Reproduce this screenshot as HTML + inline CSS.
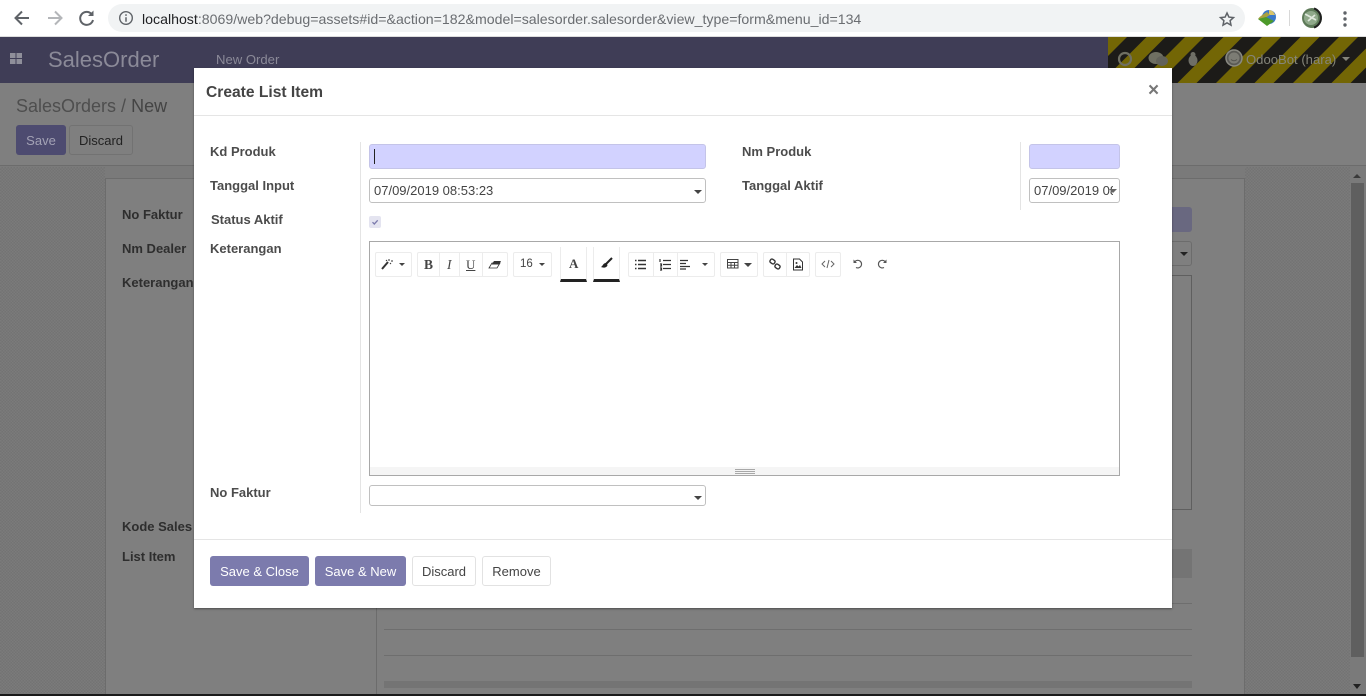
<!DOCTYPE html>
<html><head><meta charset="utf-8">
<style>
html,body{margin:0;padding:0;width:1366px;height:696px;overflow:hidden;background:#7a7a7a;font-family:"Liberation Sans",sans-serif;font-size:13px}
.a{position:absolute;box-sizing:border-box;white-space:nowrap}
.bl{font-weight:bold;color:#2e2e2e;font-size:13px;line-height:16px}
.ml{font-weight:bold;color:#4c4c4c;font-size:13px;line-height:16px}
.inp{background:#d2d2ff;border:1px solid #c4c4e8;border-radius:3px}
.sel{background:#fff;border:1px solid #c0c0c0;border-radius:3px;color:#444;font-size:13px;line-height:23px;padding-left:4px;overflow:hidden}
.car{width:0;height:0;border-left:4px solid transparent;border-right:4px solid transparent;border-top:4px solid #444}
.tb{border:1px solid #ececec;height:25px;top:252px;background:#fff;border-radius:2px}
.btn{border-radius:3px;top:556px;height:30px;line-height:31px;text-align:center;font-size:13px}
</style></head><body>

<!-- chrome bar -->
<div class="a" style="left:0;top:0;width:1366px;height:37px;background:#fff;border-bottom:1px solid #ddd"></div>
<svg class="a" style="left:0;top:0" width="110" height="36" fill="none" stroke-width="2">
<path d="M29 18H16M22 11.500L15.500 18L22 24.500" stroke="#5f6368"/>
<path d="M48 18H61M55 11.500L61.500 18L55 24.500" stroke="#b4b6b9"/>
<path d="M91.500 14A6.500 6.500 0 1 0 93 20" stroke="#5f6368"/><path d="M93.500 10.500V16H88Z" fill="#5f6368"/>
</svg>
<div class="a" style="left:108px;top:4px;width:1137px;height:28px;background:#f1f3f4;border-radius:14px"></div>
<svg class="a" style="left:118px;top:10px" width="16" height="16" fill="none"><circle cx="8" cy="8" r="6.300" stroke="#5f6368" stroke-width="1.400"/><path d="M8 7.200V11.800M8 4.300V5.900" stroke="#5f6368" stroke-width="1.500"/></svg>
<div class="a" style="left:142px;top:9.500px;font-size:14.150px;line-height:18px;color:#6a6d71"><span style="color:#202124">localhost</span>:8069/web?debug=assets#id=&amp;action=182&amp;model=salesorder.salesorder&amp;view_type=form&amp;menu_id=134</div>
<svg class="a" style="left:1218px;top:10px" width="18" height="17"><path d="M9 3L10.900 7.100L15.500 7.600L12.100 10.700L13 15.200L9 12.900L5 15.200L5.900 10.700L2.500 7.600L7.100 7.100Z" fill="none" stroke="#5f6368" stroke-width="1.500"/></svg>
<svg class="a" style="left:1257px;top:8px" width="21" height="19"><ellipse cx="12" cy="9" rx="7" ry="7" fill="#3b78c9"/><path d="M12 2C15 2 17 4 18 7L12 7Z" fill="#d8c46a"/><path d="M1 11C3 8 7 6 10 4L13 7L8 10Z" fill="#a8a040"/><path d="M1 11L10 18L17 13L9 9Z" fill="#4d9a2a"/></svg>
<div class="a" style="left:1289px;top:10px;width:1px;height:16px;background:#d8d8d8"></div>
<svg class="a" style="left:1301px;top:7px" width="22" height="22"><circle cx="11" cy="11" r="10" fill="#5d7a58"/><circle cx="10" cy="11" r="7" fill="#8fa98a"/><path d="M4 7L15 13M7 14L14 8" stroke="#dfe8dc" stroke-width="1.800"/><path d="M13 1.500A10 10 0 0 1 13 20.500" fill="none" stroke="#1f1f1f" stroke-width="2"/></svg>
<svg class="a" style="left:1341px;top:11px" width="8" height="16" fill="#5f6368"><circle cx="4" cy="2" r="1.700"/><circle cx="4" cy="8" r="1.700"/><circle cx="4" cy="14" r="1.700"/></svg>

<!-- navbar -->
<div class="a" style="left:0;top:37px;width:1366px;height:46px;background:#3f3d56"></div>
<svg class="a" style="left:1108px;top:37px" width="258" height="46"><defs><pattern id="h" width="38.500" height="46" patternUnits="userSpaceOnUse" patternTransform="skewX(-45)"><rect width="38.500" height="46" fill="#1c1b18"/><rect width="19" height="46" fill="#736605"/></pattern></defs><rect width="258" height="46" fill="url(#h)"/></svg>
<svg class="a" style="left:10px;top:53px" width="13" height="12" fill="#8f8f9a"><rect width="5.500" height="5" x="0" y="0"/><rect width="5.500" height="5" x="6.500" y="0"/><rect width="5.500" height="5" x="0" y="6"/><rect width="5.500" height="5" x="6.500" y="6"/></svg>
<div class="a" style="left:48px;top:46px;font-size:22px;line-height:28px;color:#8b8a98">SalesOrder</div>
<div class="a" style="left:216px;top:51px;font-size:13.100px;line-height:17px;color:#8b8a98">New Order</div>
<svg class="a" style="left:1115px;top:48px" width="90" height="22"><circle cx="10" cy="11" r="6" fill="none" stroke="#6f6f62" stroke-width="2.200"/><ellipse cx="41" cy="10" rx="7.500" ry="6" fill="#6f6f62"/><ellipse cx="47" cy="13" rx="6" ry="5" fill="#62625a"/><ellipse cx="78" cy="12.500" rx="4.500" ry="5.500" fill="#6f6f66"/><circle cx="78" cy="6.500" r="2.500" fill="#6f6f66"/></svg>
<svg class="a" style="left:1225px;top:49px" width="18" height="18" fill="none"><circle cx="9" cy="9" r="8" fill="#5a5a55" stroke="#8a8a82" stroke-width="1.500"/><circle cx="9" cy="9" r="5.500" fill="#7c7c74"/><path d="M6 10.500Q9 13 12 10.500" stroke="#55554f"/></svg>
<div class="a" style="left:1246px;top:51px;font-size:13.100px;line-height:17px;color:#85857a">OdooBot (hara)</div>
<div class="a car" style="left:1342px;top:57px;border-top-color:#85857a"></div>

<!-- control panel -->
<div class="a" style="left:0;top:83px;width:1366px;height:83px;background:#7f7f7f;border-bottom:1px solid #6c6c6c"></div>
<div class="a" style="left:16px;top:95px;font-size:18px;line-height:22px;color:#4e4e4e">SalesOrders <span style="color:#4e4e4e">/</span> <span style="color:#444">New</span></div>
<div class="a" style="left:16px;top:125px;width:50px;height:30px;background:#4d4b70;border-radius:3px;color:#a3a2b5;text-align:center;line-height:31px;font-size:13px">Save</div>
<div class="a" style="left:69px;top:125px;width:64px;height:30px;border:1px solid #727272;border-radius:3px;color:#222;text-align:center;line-height:29px;font-size:13px">Discard</div>

<!-- form sheet -->
<div class="a" style="left:0;top:167px;width:105px;height:527px;background:repeating-conic-gradient(#737373 0 25%,#7b7b7b 0 50%) 0 0/3px 3px"></div>
<div class="a" style="left:1245px;top:167px;width:105px;height:527px;background:repeating-conic-gradient(#737373 0 25%,#7b7b7b 0 50%) 0 0/3px 3px"></div>
<div class="a" style="left:105px;top:178px;width:1140px;height:516px;background:#7f7f7f;border:1px solid #6c6c6c;border-bottom:0"></div>
<div class="a" style="left:1350px;top:167px;width:16px;height:527px;background:#7a7a7a"></div>
<div class="a" style="left:1351px;top:183px;width:13px;height:474px;background:#5f5f5f"></div>
<div class="a" style="left:1353px;top:174px;width:0;height:0;border-left:4px solid transparent;border-right:4px solid transparent;border-bottom:4px solid #3a3a3a"></div>
<div class="a" style="left:1353px;top:684px;width:0;height:0;border-left:4px solid transparent;border-right:4px solid transparent;border-top:5px solid #222"></div>

<div class="a bl" style="left:122px;top:207px">No Faktur</div>
<div class="a bl" style="left:122px;top:241px">Nm Dealer</div>
<div class="a bl" style="left:122px;top:275px">Keterangan</div>
<div class="a bl" style="left:122px;top:519px">Kode Sales</div>
<div class="a bl" style="left:122px;top:549px">List Item</div>
<div class="a" style="left:1172px;top:207px;width:20px;height:25px;background:#696880;border-radius:0 3px 3px 0"></div>
<div class="a" style="left:1172px;top:241px;width:20px;height:25px;border:1px solid #6c6c6c;border-left:0;border-radius:0 3px 3px 0"></div>
<div class="a car" style="left:1180px;top:252px;border-top-color:#222"></div>
<div class="a" style="left:1172px;top:275px;width:20px;height:235px;border:1px solid #5f5f5f;border-left:0"></div>
<div class="a" style="left:1172px;top:549px;width:20px;height:29px;background:#747474"></div>
<div class="a" style="left:1172px;top:603px;width:20px;height:1px;background:#6e6e6e"></div>
<div class="a" style="left:376px;top:608px;width:1px;height:86px;background:#6c6c6c"></div>
<div class="a" style="left:384px;top:629px;width:808px;height:1px;background:#6e6e6e"></div>
<div class="a" style="left:384px;top:655px;width:808px;height:1px;background:#6e6e6e"></div>
<div class="a" style="left:384px;top:681px;width:808px;height:7px;background:#747474"></div>
<div class="a" style="left:0;top:694px;width:1366px;height:2px;background:#1a1a1a"></div>

<!-- modal -->
<div class="a" style="left:194px;top:68px;width:978px;height:540px;background:#fff;box-shadow:0 1px 2px rgba(0,0,0,.4)"></div>
<div class="a" style="left:206px;top:83px;font-size:15.600px;line-height:20px;font-weight:bold;color:#444">Create List Item</div>
<div class="a" style="left:1148px;top:81px;font-size:19px;line-height:20px;font-weight:bold;color:#777">×</div>
<div class="a" style="left:194px;top:115px;width:978px;height:1px;background:#e5e5e5"></div>

<div class="a" style="left:360px;top:142px;width:1px;height:371px;background:#e4e4e4"></div>
<div class="a" style="left:1020px;top:142px;width:1px;height:68px;background:#e4e4e4"></div>

<div class="a ml" style="left:210px;top:144px">Kd Produk</div>
<div class="a ml" style="left:210px;top:178px">Tanggal Input</div>
<div class="a ml" style="left:211px;top:212px">Status Aktif</div>
<div class="a ml" style="left:210px;top:241px">Keterangan</div>
<div class="a ml" style="left:210px;top:485px">No Faktur</div>
<div class="a ml" style="left:742px;top:144px">Nm Produk</div>
<div class="a ml" style="left:742px;top:178px">Tanggal Aktif</div>

<div class="a inp" style="left:369px;top:144px;width:337px;height:25px"></div>
<div class="a" style="left:374px;top:149px;width:1px;height:15px;background:#222"></div>
<div class="a inp" style="left:1029px;top:144px;width:91px;height:25px"></div>
<div class="a sel" style="left:369px;top:178px;width:337px;height:25px">07/09/2019 08:53:23</div>
<div class="a car" style="left:694px;top:190px"></div>
<div class="a sel" style="left:1029px;top:178px;width:91px;height:25px"><div style="width:79px;overflow:hidden">07/09/2019 08:53:23</div></div>
<div class="a car" style="left:1109px;top:189px;border-top-color:#666"></div>
<div class="a" style="left:369px;top:216px;width:12px;height:12px;background:#e4e4f0;border-radius:2px"></div>
<svg class="a" style="left:369px;top:216px" width="12" height="12"><path d="M3.500 6.200L5.300 8L8.700 4.300" fill="none" stroke="#7c7bad" stroke-width="1.300"/></svg>
<div class="a sel" style="left:369px;top:485px;width:337px;height:21px"></div>
<div class="a car" style="left:694px;top:496px"></div>

<!-- editor -->
<div class="a" style="left:369px;top:241px;width:751px;height:235px;border:1px solid #a8a8a8;background:#fff"></div>
<div class="a" style="left:370px;top:467px;width:749px;height:8px;background:#f5f5f5"></div>
<div class="a" style="left:735px;top:469px;width:20px;height:1px;background:#a8a8a8;box-shadow:0 2px 0 #a8a8a8,0 4px 0 #a8a8a8"></div>

<div class="a tb" style="left:375px;width:37px"></div>
<svg class="a" style="left:380px;top:258px" width="14" height="12"><path d="M2 11L8 4" stroke="#333" stroke-width="2"/><path d="M9 1V3M11 3H13M6 2L7 3M10 5L11 6" stroke="#333"/></svg>
<div class="a car" style="left:399px;top:263px;border-left-width:3px;border-right-width:3px;border-top-width:3px"></div>
<div class="a tb" style="left:417px;width:91px"></div>
<div class="a" style="left:439px;top:252px;width:1px;height:25px;background:#ececec;box-shadow:20px 0 0 #ececec,43px 0 0 #ececec"></div>
<div class="a" style="left:424px;top:257px;font:bold 13.500px/15px 'Liberation Serif',serif;color:#444">B</div>
<div class="a" style="left:447px;top:257px;font:italic 13.500px/15px 'Liberation Serif',serif;color:#444">I</div>
<div class="a" style="left:466px;top:257px;font:13px/15px 'Liberation Serif',serif;color:#444;text-decoration:underline">U</div>
<svg class="a" style="left:488px;top:259px" width="14" height="10"><path d="M1 9L4 4H12L9 9Z" fill="#fff" stroke="#333" stroke-width=".8"/><path d="M4 5L6 2H13L11 5.500H4Z" fill="#333"/></svg>
<div class="a tb" style="left:513px;width:39px"></div>
<div class="a" style="left:520px;top:257px;font-size:11.500px;line-height:15px;color:#444">16</div>
<div class="a car" style="left:539px;top:263px;border-left-width:3px;border-right-width:3px;border-top-width:3px"></div>

<div class="a" style="left:560px;top:247px;width:27px;height:35px;border:1px solid #ececec;border-top:0;border-bottom:3px solid #222"></div>
<div class="a" style="left:569px;top:256px;font:bold 13px/15px 'Liberation Serif',serif;color:#444">A</div>
<div class="a" style="left:593px;top:247px;width:27px;height:35px;border:1px solid #ececec;border-top:0;border-bottom:3px solid #222"></div>
<svg class="a" style="left:600px;top:257px" width="13" height="13"><path d="M12 1L6 7" stroke="#222" stroke-width="2"/><path d="M6 6C3 6 3 9 1 10C3 11 7 11 7.500 8Z" fill="#222"/></svg>

<div class="a tb" style="left:628px;width:87px"></div>
<div class="a" style="left:653px;top:252px;width:1px;height:25px;background:#ececec;box-shadow:24px 0 0 #ececec"></div>
<svg class="a" style="left:634px;top:258px" width="80" height="13" stroke="#333" fill="none"><path d="M4 2.500H12M4 6.500H12M4 10.500H12M1 2.500H2.500M1 6.500H2.500M1 10.500H2.500" stroke-width="1.500"/><path d="M29 2.500H37M29 6.500H37M29 10.500H37M26 1V4M26 6H27.500V8H26M26 10H27.500V12H26" stroke-width="1.200"/><path d="M46 2.500H54M46 5.500H52M46 8.500H56M46 11H52" stroke-width="1.300"/></svg>
<div class="a car" style="left:702px;top:263px;border-left-width:3px;border-right-width:3px;border-top-width:3px"></div>
<div class="a tb" style="left:720px;width:38px"></div>
<svg class="a" style="left:727px;top:259px" width="12" height="10" fill="none" stroke="#444"><rect x=".5" y=".5" width="10.500" height="8.500"/><path d="M.5 3.500H11M.5 6.200H11M4 3.500V9M7.500 3.500V9"/></svg>
<div class="a car" style="left:744px;top:263px"></div>
<div class="a tb" style="left:763px;width:47px"></div>
<div class="a" style="left:786px;top:252px;width:1px;height:25px;background:#ececec"></div>
<svg class="a" style="left:769px;top:258px" width="12" height="12" fill="none" stroke="#333" stroke-width="1.400"><rect x="1" y="1.500" width="5" height="4" rx="1.500" transform="rotate(35 3.500 3.500)"/><rect x="6" y="6.500" width="5" height="4" rx="1.500" transform="rotate(35 8.500 8.500)"/></svg>
<svg class="a" style="left:792px;top:258px" width="12" height="13"><path d="M1.500 1H7.500L10.500 4V12H1.500Z" fill="#fff" stroke="#333"/><path d="M2.500 10L5 7L6.500 8.500L8 7L9.500 10Z" fill="#333"/><circle cx="4.500" cy="5" r="1" fill="#333"/></svg>
<div class="a tb" style="left:815px;width:26px"></div>
<svg class="a" style="left:821px;top:259px" width="14" height="10" fill="none" stroke="#666"><path d="M4 2L1 5L4 8M10 2L13 5L10 8M8 1L6 9"/></svg>
<svg class="a" style="left:852px;top:258px" width="36" height="12" fill="none" stroke="#555" stroke-width="1.200"><path d="M3 3.500A3.800 3.800 0 1 1 4 9.500"/><path d="M1.500 1.500V5H5Z" fill="#555" stroke="none"/><path d="M33 3.500A3.800 3.800 0 1 0 32 9.500"/><path d="M34.500 1.500V5H31Z" fill="#555" stroke="none"/></svg>

<!-- footer -->
<div class="a" style="left:194px;top:539px;width:978px;height:1px;background:#e5e5e5"></div>
<div class="a btn" style="left:210px;width:99px;background:#7c7bad;color:#fff">Save &amp; Close</div>
<div class="a btn" style="left:315px;width:91px;background:#7c7bad;color:#fff">Save &amp; New</div>
<div class="a btn" style="left:412px;width:64px;background:#fff;border:1px solid #e2e2e2;color:#444;line-height:29px">Discard</div>
<div class="a btn" style="left:482px;width:69px;background:#fff;border:1px solid #e2e2e2;color:#444;line-height:29px">Remove</div>

</body></html>
